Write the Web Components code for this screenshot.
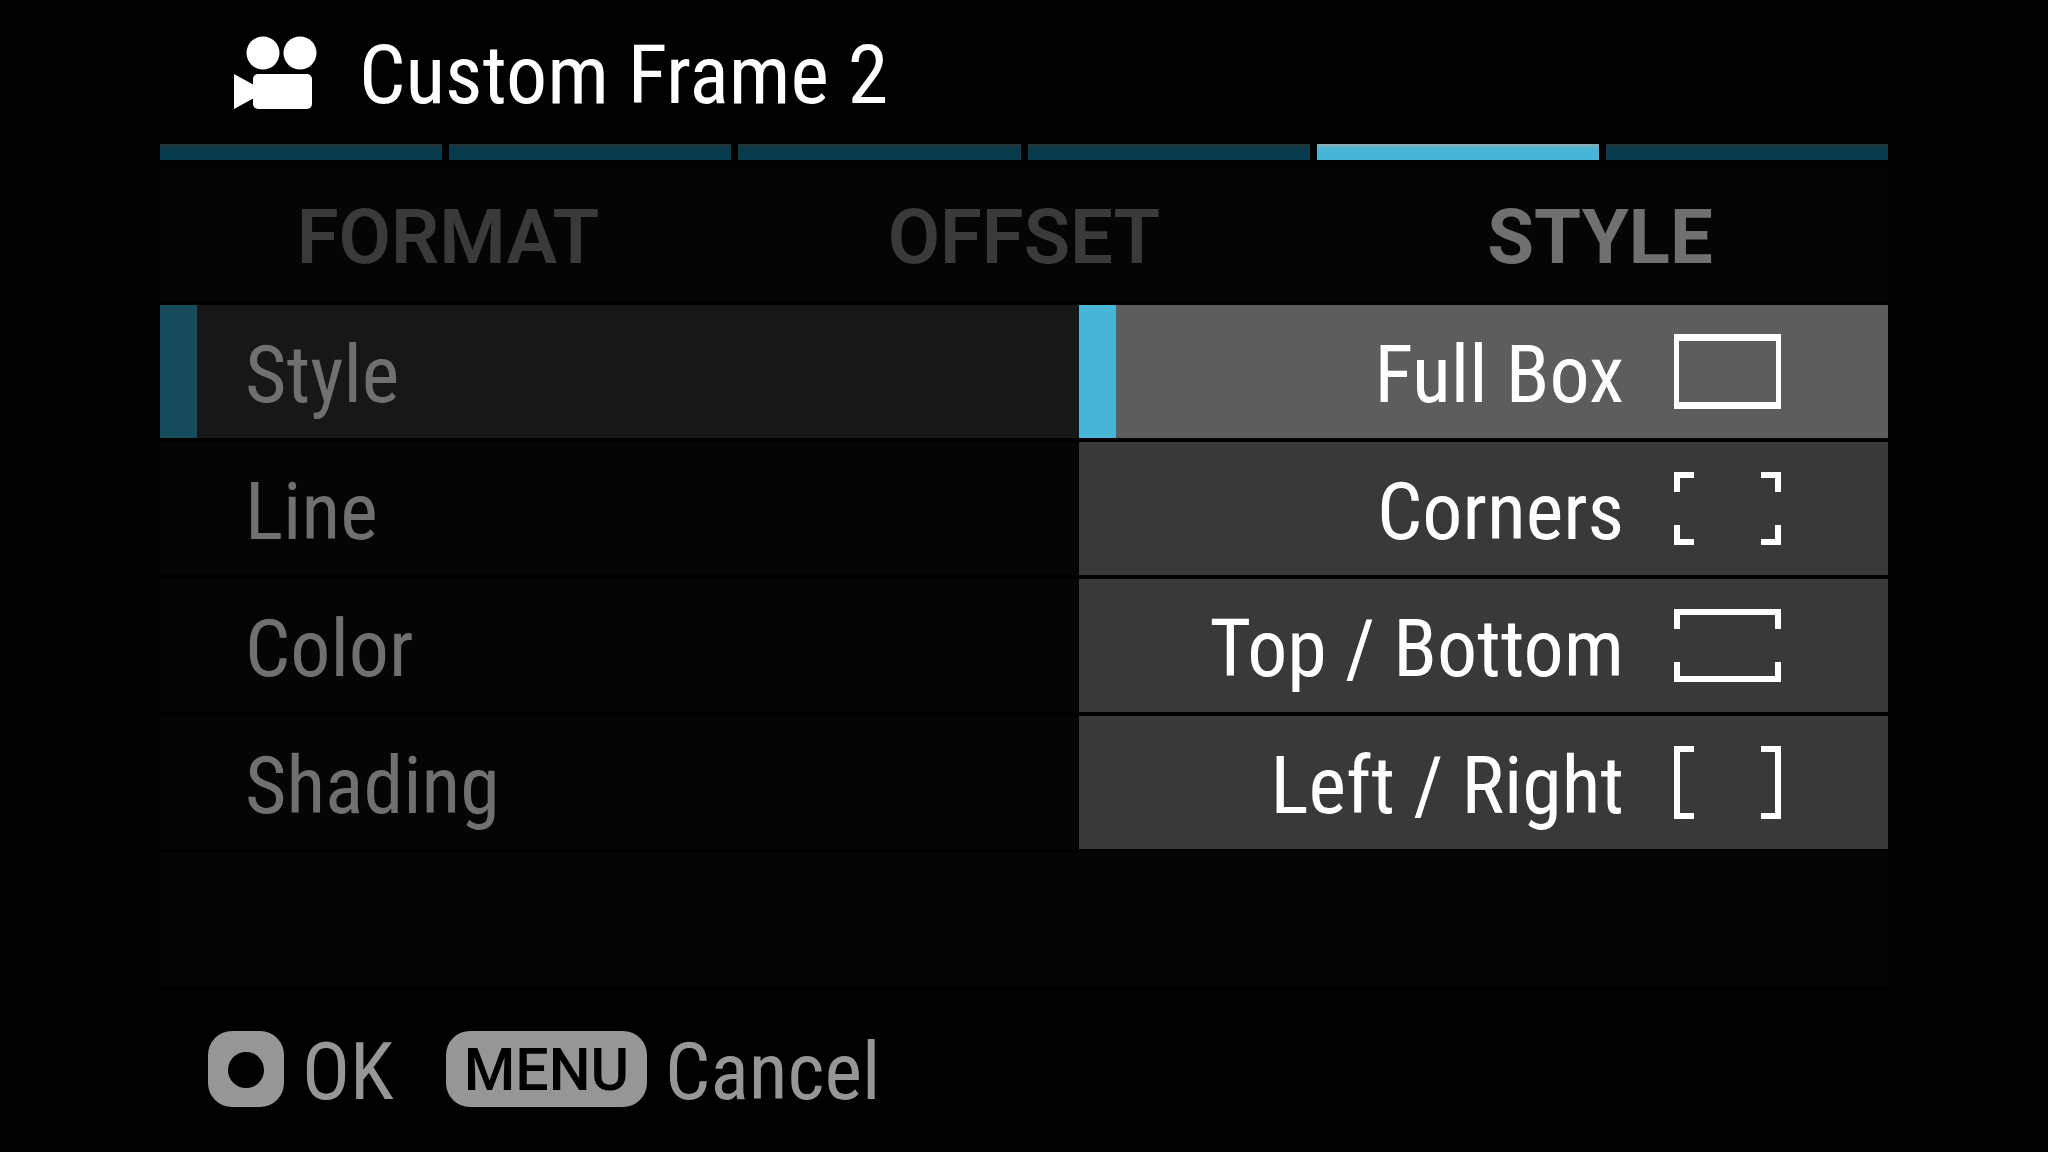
<!DOCTYPE html>
<html lang="en">
<head>
<meta charset="utf-8">
<meta name="viewport" content="width=device-width, initial-scale=1">
<title>Custom Frame 2</title>
<style>
    body {
        margin: 0;
        min-height: 100vh;
        background: #000;
        --menu-font: "Roboto Condensed", "Liberation Sans Narrow", "Liberation Sans", sans-serif;
        --caps-font: Roboto, sans-serif;
        --row: 133px;
        --accent: #49b5d6;
    }
</style>
</head>
<body>
<camera-menu></camera-menu>

<script>
customElements.define('menu-title', class extends HTMLElement {
    connectedCallback() {
        const shadow = this.attachShadow({mode: 'open'});
        shadow.innerHTML = `
<style>
    :host {
        display: flex;
        align-items: center;
        gap: 42px;
        height: 144px;
        padding-left: 74px;
        color: #fff;
    }
    svg {
        flex: none;
        width: 83px;
        height: 73px;
    }
    h1 {
        margin: 0;
        padding-top: 6px;
        font: 400 82px/104px var(--menu-font);
        white-space: nowrap;
    }
</style>
<svg viewBox="0 0 83 73" fill="currentColor" aria-hidden="true">
    <circle cx="29" cy="17" r="16.5"/>
    <circle cx="66" cy="17" r="16.5"/>
    <rect x="19" y="38" width="59" height="35" rx="5"/>
    <path d="M0 38 L20 49 V62 L0 73 Z"/>
</svg>
<h1><slot></slot></h1>`;
    }
});


// Thin strip above the tabs, one segment for each page.
customElements.define('page-strip', class extends HTMLElement {
    connectedCallback() {
        const count = Number(this.getAttribute('count'));
        const current = Number(this.getAttribute('current'));
        const shadow = this.attachShadow({mode: 'open'});
        let segments = '';
        for (let i = 1; i <= count; i++) {
            segments += i === current ? '<i class="on"></i>' : '<i></i>';
        }
        shadow.innerHTML = `
<style>
    :host {
        display: flex;
        gap: 7px;
        height: 16px;
        margin-bottom: 8px;
    }
    i {
        flex: 1;
        background: linear-gradient(#2b3437, #073b4c 5px);
    }
    .on {
        background: linear-gradient(#91a9b0, var(--accent) 5px);
    }
</style>
${segments}`;
    }
});


customElements.define('menu-tab', class extends HTMLElement {
    connectedCallback() {
        const shadow = this.attachShadow({mode: 'open'});
        shadow.innerHTML = `
<style>
    :host {
        display: block;
        flex: 1;
    }
    button {
        width: 100%;
        height: 100%;
        padding: 4px 0 0;
        border: 0;
        background: none;
        color: #3a3a3a;
        font: 600 76px/90px var(--caps-font);
    }
    :host([selected]) button {
        color: #707070;
        font-weight: 700;
    }
</style>
<button type="button" aria-pressed="${this.hasAttribute('selected')}"><slot></slot></button>`;
    }
});


customElements.define('menu-row', class extends HTMLElement {
    connectedCallback() {
        const shadow = this.attachShadow({mode: 'open'});
        shadow.innerHTML = `
<style>
    :host {
        display: block;
        height: var(--row);
        background: #050505;
    }
    button {
        width: 100%;
        height: 100%;
        padding: 6px 0 0 48px;
        border: 0;
        border-left: 37px solid transparent;
        background: none;
        color: #707070;
        font: 400 80px/104px var(--menu-font);
        text-align: left;
    }
    :host([selected]) {
        background: #171717;
    }
    :host([selected]) button {
        border-left-color: #154b5a;
    }
</style>
<button type="button"><slot></slot></button>`;
    }
});


const FRAMES = {
    box: '<path d="M0 0H107V75H0ZM5 7V68H102V7Z"/>',
    corners: '<path d="M0 1H20V7H6V21H0ZM107 1H87V7H101V21H107ZM0 74H20V68H6V54H0ZM107 74H87V68H101V54H107Z"/>',
    horizontal: '<path d="M0 1H107V21H101V7H6V21H0ZM0 74H107V54H101V68H6V54H0Z"/>',
    vertical: '<path d="M0 1H20V7H6V68H20V74H0ZM107 1H87V7H101V68H87V74H107Z"/>'
};

customElements.define('menu-option', class extends HTMLElement {
    connectedCallback() {
        const shadow = this.attachShadow({mode: 'open'});
        shadow.innerHTML = `
<style>
    :host {
        display: block;
        height: var(--row);
        background: #393939;
    }
    button {
        display: flex;
        align-items: center;
        justify-content: flex-end;
        gap: 50px;
        width: 100%;
        height: 100%;
        padding: 0 107px 0 0;
        border: 0;
        border-left: 37px solid transparent;
        background: none;
        color: #fff;
        font: 400 80px/104px var(--menu-font);
        white-space: nowrap;
    }
    span {
        padding-top: 6px;
    }
    svg {
        flex: none;
        width: 107px;
        height: 75px;
    }
    :host([selected]) {
        background: #5d5d5d;
    }
    :host([selected]) button {
        border-left-color: var(--accent);
    }
</style>
<button type="button" aria-pressed="${this.hasAttribute('selected')}">
    <span><slot></slot></span>
    <svg viewBox="0 0 107 75" fill="currentColor" fill-rule="evenodd" aria-hidden="true">${FRAMES[this.getAttribute('frame')]}</svg>
</button>`;
    }
});


customElements.define('key-hint', class extends HTMLElement {
    connectedCallback() {
        const name = this.getAttribute('key');
        const shadow = this.attachShadow({mode: 'open'});
        shadow.innerHTML = `
<style>
    :host {
        display: block;
    }
    button {
        display: flex;
        align-items: center;
        gap: 18px;
        padding: 0;
        border: 0;
        background: none;
        color: #969696;
        font: 400 80px/104px var(--menu-font);
    }
    .key {
        display: flex;
        align-items: center;
        justify-content: center;
        box-sizing: border-box;
        min-width: 76px;
        height: 76px;
        padding: 2px 18px 0;
        border-radius: 24px;
        background: #969696;
        color: #000;
        font: 500 59px/70px var(--caps-font);
    }
    .dot {
        width: 36px;
        height: 36px;
        border-radius: 50%;
        background: #000;
    }
    .label {
        padding-top: 6px;
    }
</style>
<button type="button">
    <span class="key">${name || '<span class="dot"></span>'}</span>
    <span class="label"><slot></slot></span>
</button>`;
    }
});


customElements.define('camera-menu', class extends HTMLElement {
    connectedCallback() {
        const shadow = this.attachShadow({mode: 'open'});
        shadow.innerHTML = `
<style>
    :host {
        display: block;
        padding: 0 160px;
    }
    main {
        display: grid;
        gap: 4px;
    }
    nav {
        display: flex;
        height: var(--row);
        background: #050505;
    }
    .columns {
        display: grid;
        grid-template-columns: 919fr 809fr;
    }
    .list {
        display: grid;
        gap: 4px;
    }
    .rest {
        height: var(--row);
        background: #050505;
    }
    footer {
        display: flex;
        align-items: center;
        gap: 52px;
        height: 166px;
        padding-left: 48px;
    }
</style>
<menu-title>Custom Frame 2</menu-title>
<page-strip count="6" current="5"></page-strip>
<main>
    <nav>
        <menu-tab>FORMAT</menu-tab>
        <menu-tab>OFFSET</menu-tab>
        <menu-tab selected>STYLE</menu-tab>
    </nav>
    <div class="columns">
        <div class="list">
            <menu-row selected>Style</menu-row>
            <menu-row>Line</menu-row>
            <menu-row>Color</menu-row>
            <menu-row>Shading</menu-row>
        </div>
        <div class="list">
            <menu-option frame="box" selected>Full Box</menu-option>
            <menu-option frame="corners">Corners</menu-option>
            <menu-option frame="horizontal">Top / Bottom</menu-option>
            <menu-option frame="vertical">Left / Right</menu-option>
        </div>
    </div>
    <div class="rest"></div>
</main>
<footer>
    <key-hint>OK</key-hint>
    <key-hint key="MENU">Cancel</key-hint>
</footer>`;
    }
});
</script>
</body>
</html>
